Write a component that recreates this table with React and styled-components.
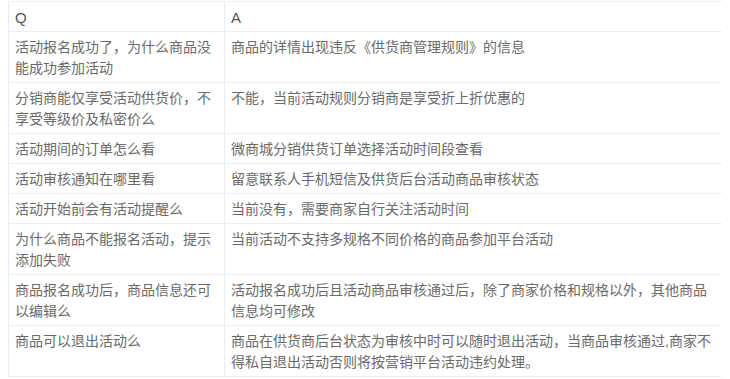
import React from 'react';
import styled, { createGlobalStyle } from 'styled-components';

const GlobalStyle = createGlobalStyle`
  body {
    margin: 1px 8px 0;
    background: #fff;
    font-family: "Helvetica Neue", "Liberation Sans", "Noto Sans CJK SC", sans-serif;
  }
`;

const Table = styled.table`
  width: 716px;
  table-layout: fixed;
  border-collapse: collapse;
  font-size: 14px;
  line-height: 21px;
  color: #6a6a6a;
`;

const Cell = styled.td`
  border: 1px solid #e6eef6;
  padding: 5px 6px 3px;
  vertical-align: top;
  text-align: left;
  font-weight: normal;
  word-break: break-all;
`;

const HeadCell = styled(Cell).attrs({ as: 'th' })`
  color: #555;
  font-size: 15px;
`;

const rows = [
  ['活动报名成功了，为什么商品没能成功参加活动', '商品的详情出现违反《供货商管理规则》的信息'],
  ['分销商能仅享受活动供货价，不享受等级价及私密价么', '不能，当前活动规则分销商是享受折上折优惠的'],
  ['活动期间的订单怎么看', '微商城分销供货订单选择活动时间段查看'],
  ['活动审核通知在哪里看', '留意联系人手机短信及供货后台活动商品审核状态'],
  ['活动开始前会有活动提醒么', '当前没有，需要商家自行关注活动时间'],
  ['为什么商品不能报名活动，提示添加失败', '当前活动不支持多规格不同价格的商品参加平台活动'],
  ['商品报名成功后，商品信息还可以编辑么', '活动报名成功后且活动商品审核通过后，除了商家价格和规格以外，其他商品信息均可修改'],
  ['商品可以退出活动么', '商品在供货商后台状态为审核中时可以随时退出活动，当商品审核通过,商家不得私自退出活动否则将按营销平台活动违约处理。'],
];

export default function App() {
  return (
    <>
      <GlobalStyle />
      <Table>
        <colgroup>
          <col style={{ width: 216 }} />
          <col style={{ width: 500 }} />
        </colgroup>
        <thead>
          <tr>
            <HeadCell>Q</HeadCell>
            <HeadCell>A</HeadCell>
          </tr>
        </thead>
        <tbody>
          {rows.map(([q, a]) => (
            <tr key={q}>
              <Cell>{q}</Cell>
              <Cell>{a}</Cell>
            </tr>
          ))}
        </tbody>
      </Table>
    </>
  );
}
